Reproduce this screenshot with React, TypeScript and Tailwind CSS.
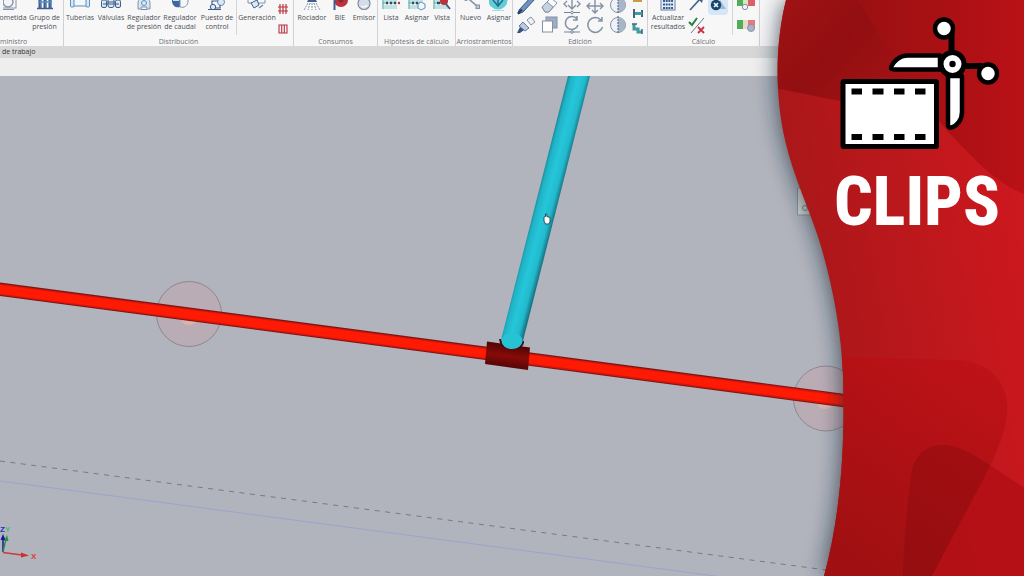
import type { ReactNode } from "react";

const NAVY = "#3f5f8a";
const BLUE = "#5f8fc0";
const PALE = "#dbe7f2";
const SLATE = "#8492a8";
const TEAL = "#3f9c9c";
const CRIMSON = "#b8323f";

/* Command icons are drawn upwards from the caption, the ribbon hides their upper part. */
function BigIcon({ children }: { children: ReactNode }) {
  return (
    <svg viewBox="0 -9 20 20" className="h-5 w-5 shrink-0" fill="none" aria-hidden="true">
      {children}
    </svg>
  );
}

function SmallIcon({ children }: { children: ReactNode }) {
  return (
    <svg viewBox="0 0 20 20" className="h-5 w-5 shrink-0" fill="none" aria-hidden="true">
      {children}
    </svg>
  );
}

function Command({ label, width, children }: { label: string; width: string; children: ReactNode }) {
  return (
    <button
      type="button"
      className={`flex shrink-0 flex-col items-center gap-[2px] text-[7px] leading-[9px] text-[#4c4f55] ${width}`}
    >
      {children}
      <span className="h-[18px] whitespace-pre text-center">{label}</span>
    </button>
  );
}

function Tool({ name, active, children }: { name: string; active?: boolean; children: ReactNode }) {
  return (
    <button type="button" aria-label={name} className={active ? "rounded-sm bg-[#d5e6f5]" : ""}>
      <SmallIcon>{children}</SmallIcon>
    </button>
  );
}

function Group({
  title,
  width,
  align = "items-center",
  children,
}: {
  title: string;
  width: string;
  align?: string;
  children: ReactNode;
}) {
  return (
    <section className={`flex shrink-0 flex-col justify-end border-r border-[#cfd1d4] ${align} ${width}`}>
      <div className="flex h-[31px] w-full items-end">{children}</div>
      <h2 className="mt-[6px] whitespace-nowrap text-[7px] leading-[9px] text-[#6d7076]">{title}</h2>
    </section>
  );
}

function Separator() {
  return <div className="-mb-1 h-[45px] w-px shrink-0 bg-[#d3d5d8]" />;
}

function Ribbon() {
  return (
    <header className="flex h-[46px] shrink-0 items-end overflow-hidden bg-[#f7f7f8]">
      <Group title="ministro" width="w-16" align="items-start">
        <Command label="ometida" width="w-[26px]">
          <BigIcon>
            <rect x="-3" y="-9" width="16" height="17" stroke={SLATE} />
            <circle cx="5" cy="2" r="5" stroke={SLATE} strokeWidth="1.4" fill="#f2f5f8" />
            <path d="M-1 9.500h12" stroke={SLATE} />
          </BigIcon>
        </Command>
        <Command label={"Grupo de\npresión"} width="w-[37px]">
          <BigIcon>
            <path d="M5 -5v13M10 -5v13M15 -5v13" stroke={NAVY} strokeWidth="3" />
            <path d="M6 -5v13M11 -5v13M16 -5v13" stroke={BLUE} />
            <path d="M2 8.500h16" stroke={NAVY} strokeWidth="1.500" />
            <path d="M3 2h14" stroke={BLUE} strokeWidth="1.500" />
          </BigIcon>
        </Command>
      </Group>

      <Group title="Distribución" width="w-[230px]">
        <Command label="Tuberías" width="w-8">
          <BigIcon>
            <path d="M3 -3h14v9H3z" fill="#f3f6fa" stroke={BLUE} />
            <rect x="0.500" y="-5" width="3.500" height="12" rx="1" fill={PALE} stroke={BLUE} />
            <rect x="16" y="-5" width="3.500" height="12" rx="1" fill={PALE} stroke={BLUE} />
          </BigIcon>
        </Command>
        <Command label="Válvulas" width="w-[30px]">
          <BigIcon>
            <rect x="0.500" y="0" width="5" height="7.500" rx="1.500" fill={PALE} stroke={NAVY} />
            <rect x="7" y="-2" width="6" height="9.500" rx="2" fill={PALE} stroke={NAVY} />
            <rect x="14.500" y="0" width="5" height="7.500" rx="1.500" fill={PALE} stroke={NAVY} />
            <path d="M2 4h16M5.500 2h9" stroke={NAVY} strokeWidth="1.200" />
          </BigIcon>
        </Command>
        <Command label={"Regulador\nde presión"} width="w-9">
          <BigIcon>
            <path d="M4 3a6 6 0 0 1 12 0v6h-3V7H7v2H4z" fill={PALE} stroke={SLATE} />
            <circle cx="10" cy="3" r="2.500" stroke={BLUE} />
            <path d="M7 9.500h6" stroke={BLUE} />
          </BigIcon>
        </Command>
        <Command label={"Regulador\nde caudal"} width="w-9">
          <BigIcon>
            <path d="M10 -5H2v6a6 6 0 0 0 8 6z" fill="#3b68a0" />
            <path d="M10 -5h8v6a6 6 0 0 1-8 6z" fill="#f5f8fb" stroke={SLATE} />
            <path d="M3 0h6" stroke="#cfe0f1" strokeWidth="2" />
          </BigIcon>
        </Command>
        <Command label={"Puesto de\ncontrol"} width="w-[38px]">
          <BigIcon>
            <circle cx="6" cy="7" r="2.700" fill={PALE} stroke={NAVY} />
            <circle cx="14" cy="2" r="3.500" fill={PALE} stroke={BLUE} />
            <path d="M5 4V1h6M8 8h5V5M1 9.500h13" stroke={NAVY} strokeWidth="1.200" />
          </BigIcon>
        </Command>
        <Separator />
        <Command label="Generación" width="w-10">
          <BigIcon>
            <path d="M1 -5h9v8H1zM10 -4h8v7h-8" fill="#f5f8fb" stroke={SLATE} />
            <path d="M4 3l3 5 5-3-2-5z" fill={PALE} stroke={NAVY} />
            <path d="M12 8l4-3" stroke={BLUE} strokeWidth="1.500" />
          </BigIcon>
        </Command>
        <div className="-mb-1 flex flex-col">
          <button type="button" aria-label="Red de rociadores" className="h-4 w-3">
            <svg viewBox="0 0 12 16" className="h-4 w-3" fill="none">
              <path d="M3 1v10M6 1v10M9 1v10M1 4h10M1 8h10" stroke={CRIMSON} strokeWidth="1.200" />
            </svg>
          </button>
          <button type="button" aria-label="Malla de rociadores" className="h-4 w-3">
            <svg viewBox="0 0 12 16" className="h-4 w-3" fill="none">
              <path d="M2 6h8v8H2zM4.700 6v8M7.300 6v8" stroke={CRIMSON} strokeWidth="1.100" />
            </svg>
          </button>
        </div>
      </Group>

      <Group title="Consumos" width="w-[84px]">
        <Command label="Rociador" width="w-9">
          <BigIcon>
            <path d="M8 -9h4v9H8zM6 0h8l1 2H5z" fill={NAVY} />
            <path d="M6 3l-4 7M8 3l-2 7M10 3v7M12 3l2 7M14 3l4 7" stroke={SLATE} strokeDasharray="2 1" />
          </BigIcon>
        </Command>
        <Command label="BIE" width="w-5">
          <BigIcon>
            <circle cx="11" cy="0" r="7" fill={CRIMSON} />
            <path d="M4.500 -5v15" stroke={NAVY} strokeWidth="2" />
            <circle cx="11" cy="0" r="2.500" fill="#8d2634" />
          </BigIcon>
        </Command>
        <Command label="Emisor" width="w-7">
          <BigIcon>
            <circle cx="10" cy="3.500" r="6" fill="#d3dce7" stroke="#7f8ba0" strokeWidth="1.200" />
            <path d="M7 6a4 4 0 0 0 6-1" stroke="#f8fafc" strokeWidth="1.500" />
          </BigIcon>
        </Command>
      </Group>

      <Group title="Hipótesis de cálculo" width="w-[78px]">
        <Command label="Lista" width="w-[26px]">
          <BigIcon>
            <path d="M3 -2h13v4H3zM3 5h13v4H3z" fill="#bfe3e2" />
            <path d="M2 -5v14M2 3h14" stroke={TEAL} />
            <path d="M5 3h2M9 3h2M13 3h2" stroke="#34495f" strokeWidth="2.500" />
            <circle cx="18" cy="3" r="1.200" fill={CRIMSON} />
          </BigIcon>
        </Command>
        <Command label="Asignar" width="w-[26px]">
          <BigIcon>
            <path d="M3 -2h13v4H3zM3 5h8v4H3z" fill="#bfe3e2" />
            <path d="M2 -5v14M2 3h11" stroke={TEAL} />
            <path d="M5 3h2M9 3h2" stroke="#34495f" strokeWidth="2.500" />
            <path d="M11 4l3-2 4 2v4l-4 2-3-2z" fill="#f0f6fa" stroke={BLUE} />
          </BigIcon>
        </Command>
        <Command label="Vista" width="w-6">
          <BigIcon>
            <path d="M3 -2h13v4H3zM3 5h13v4H3z" fill="#bfe3e2" />
            <path d="M2 -5v14M2 3h11" stroke={TEAL} />
            <path d="M5 3h3" stroke="#34495f" strokeWidth="2.500" />
            <circle cx="12" cy="1" r="4" fill={CRIMSON} />
            <path d="M14 4l4 5" stroke="#39537c" strokeWidth="1.800" />
          </BigIcon>
        </Command>
      </Group>

      <Group title="Arriostramientos" width="w-[57px]">
        <Command label="Nuevo" width="w-[29px]">
          <BigIcon>
            <path d="M2 -6L17 7" stroke={SLATE} strokeWidth="1.600" />
            <rect x="15" y="5" width="3.500" height="3.500" fill="#b9c6d6" stroke={SLATE} />
            <circle cx="5" cy="-1" r="2" fill={SLATE} />
          </BigIcon>
        </Command>
        <Command label="Asignar" width="w-7">
          <BigIcon>
            <circle cx="9" cy="0" r="9.500" fill="#63cdd6" />
            <path d="M9 -6v13M4 0l5 6 5-6M4 -2h10" stroke="#24698f" strokeWidth="1.500" />
            <path d="M3 10.500h12" stroke="#a5dce0" />
          </BigIcon>
        </Command>
      </Group>

      <Group title="Edición" width="w-[135px]">
        <div className="-mb-1 flex w-full justify-between pl-[3px]">
          <div className="grid grid-cols-[repeat(5,23px)]">
            <Tool name="Editar">
              <path d="M3 15L16 1l3 3L7 17l-5 2z" fill="#6f93c1" stroke="#34547f" />
              <path d="M2 18.500l4-4" stroke="#233c5e" strokeWidth="2" />
            </Tool>
            <Tool name="Borrar">
              <path d="M3 12L12 3l6 5-8 9H6z" fill="#fafbfc" stroke={SLATE} />
              <path d="M8 7l6 5-4 5H6l-3-5z" fill="#c8d1de" stroke={SLATE} />
            </Tool>
            <Tool name="Mover">
              <path d="M10 1v13M6 10l4 4 4-4M5 6L2 9l3 3M15 6l3 3-3 3" stroke={SLATE} strokeWidth="1.400" />
              <path d="M2 17.500h16" stroke="#70849e" />
              <circle cx="10" cy="17.500" r="1.300" fill="#f7f7f8" stroke="#70849e" />
            </Tool>
            <Tool name="Mover grupo">
              <path d="M10 3v14M2 11h16M7 15l3 3 3-3M5 8l-3 3 3 3M15 8l3 3-3 3" stroke={SLATE} strokeWidth="1.400" />
            </Tool>
            <Tool name="Simetría">
              <circle cx="10" cy="10" r="7.500" fill="#eef2f7" stroke={SLATE} />
              <path d="M10 2.500a7.500 7.500 0 0 1 0 15z" fill="#a9b6c8" />
              <path d="M10 1v18" stroke={NAVY} strokeDasharray="2 1" />
            </Tool>
            <Tool name="Copiar propiedades">
              <path d="M11 5l4-3 4 5-4 3z" fill="#eef2f7" stroke={SLATE} />
              <path d="M7 7l6 6-4 3-6-5z" fill="#b9c8db" stroke="#627c9e" />
              <path d="M4 12l4 3-4 3H1z" fill="#31537f" />
            </Tool>
            <Tool name="Copiar">
              <rect x="7" y="2" width="11" height="11" fill="#9fadc2" stroke={SLATE} />
              <rect x="3.500" y="6" width="10" height="11" fill="#fff" stroke={SLATE} />
            </Tool>
            <Tool name="Girar">
              <path d="M15 4a6.500 6.500 0 1 0 1 6M15 1v4h-4" stroke={SLATE} strokeWidth="1.500" />
              <path d="M2 17h16" stroke="#70849e" />
              <circle cx="10" cy="17" r="1.300" fill="#f7f7f8" stroke="#70849e" />
            </Tool>
            <Tool name="Girar grupo">
              <path d="M16 5a7.500 7.500 0 1 0 1.500 7M17 2v4h-4" stroke={SLATE} strokeWidth="1.500" />
            </Tool>
            <Tool name="Simetría con copia">
              <circle cx="10" cy="10" r="7.500" fill="#eef2f7" stroke={SLATE} />
              <path d="M10 2.500a7.500 7.500 0 0 1 0 15z" fill="#a9b6c8" />
              <path d="M10 1v18" stroke={NAVY} strokeDasharray="2 1" />
            </Tool>
          </div>
          <svg viewBox="0 0 16 40" className="h-10 w-4" fill="none" aria-hidden="true">
            <path d="M2 0h9v7H2z" fill="#c99b45" />
            <path d="M3 14v9M11 15v7" stroke="#45627f" strokeWidth="2" />
            <path d="M4 18.500h7" stroke={TEAL} strokeWidth="3" />
            <path d="M3 29v5h4v3h4" stroke={TEAL} strokeWidth="3" />
            <path d="M1 29h5M11 34v5" stroke="#45627f" strokeWidth="1.500" />
          </svg>
        </div>
      </Group>

      <Group title="Cálculo" width="w-28">
        <Command label={"Actualizar\nresultados"} width="w-10">
          <BigIcon>
            <rect x="3" y="-9" width="14" height="19" fill="#e8eef6" stroke="#6982a6" />
            <path d="M5 1h10M5 4.500h10M5 8h10" stroke="#385d91" strokeWidth="2.200" strokeDasharray="2 0.700" />
          </BigIcon>
        </Command>
        <div className="-mb-1 grid grow grid-cols-[20px_20px]">
          <Tool name="Calcular">
            <path d="M2 15L12 4" stroke={NAVY} strokeWidth="1.600" />
            <path d="M8 2l8-2-2 8z" fill={NAVY} />
          </Tool>
          <Tool name="Opciones" active>
            <path d="M12 5l6 9h-6z" fill="#9eb8d5" />
            <circle cx="8" cy="10" r="5.200" fill="#17456e" />
            <path d="M6 8l4 4M10 8l-4 4" stroke="#fff" strokeWidth="1.600" />
          </Tool>
          <Tool name="Comprobar">
            <path d="M1 7l3 3 5-7" stroke="#29803c" strokeWidth="2" />
            <path d="M3 18L16 3" stroke="#6c7888" />
            <path d="M10 12l6 6M16 12l-6 6" stroke="#cb3240" strokeWidth="1.800" />
          </Tool>
        </div>
        <Separator />
        <div className="-mb-1 flex w-[26px] flex-col items-center">
          <Tool name="Escala de resultados">
            <path d="M1 1h6v10H1z" fill="#4fae57" />
            <path d="M7 1h5v10H7z" fill="#d9e4c0" />
            <path d="M12 1h7v10h-7z" fill="#db6068" />
            <circle cx="9" cy="12" r="2.700" fill="#eef3f8" stroke={SLATE} />
          </Tool>
          <Tool name="Leyenda de resultados">
            <path d="M1 5h6v9H1z" fill="#4fae57" />
            <path d="M7 5h5v9H7z" fill="#e9d9c8" />
            <path d="M12 5h7v9h-7z" fill="#e27b80" />
            <circle cx="15" cy="13" r="3.500" fill="#a9b3c5" stroke="#8995ab" />
          </Tool>
        </div>
      </Group>
    </header>
  );
}

function Viewport() {
  return (
    <main className="min-h-0 flex-1 bg-[#b1b4bd]">
      <svg
        viewBox="0 76 1024 500"
        preserveAspectRatio="xMinYMin slice"
        className="block h-full w-full"
        role="img"
        aria-label="Vista 3D de la instalación"
      >
        <defs>
          <linearGradient id="riser" gradientUnits="userSpaceOnUse" x1="533" y1="205" x2="556" y2="211">
            <stop offset="0" stopColor="#14788a" />
            <stop offset="0.200" stopColor="#20b3c6" />
            <stop offset="0.500" stopColor="#26c6da" />
            <stop offset="0.800" stopColor="#22b9cc" />
            <stop offset="1" stopColor="#167585" />
          </linearGradient>
          <linearGradient id="coupling" gradientUnits="userSpaceOnUse" x1="509" y1="345" x2="506" y2="367">
            <stop offset="0" stopColor="#520606" />
            <stop offset="0.500" stopColor="#880b08" />
            <stop offset="1" stopColor="#560606" />
          </linearGradient>
        </defs>

        <path d="M0 461L1024 596" stroke="#777a82" strokeDasharray="5 5.500" />
        <path d="M0 481L1024 617" stroke="#9da3cf" />

        <g fill="#bda9b2" fillOpacity="0.750" stroke="#8f8790">
          <circle cx="189" cy="314" r="32.500" />
          <circle cx="826" cy="398.500" r="32.500" />
        </g>
        <ellipse cx="189" cy="321" rx="7" ry="4" fill="#dbb3ab" />
        <ellipse cx="825" cy="405" rx="7" ry="4" fill="#dbb3ab" />

        <path d="M-10 288L1024 424.300" stroke="#7a1614" strokeWidth="13.400" />
        <path d="M-10 288L1024 424.300" stroke="#d9150b" strokeWidth="11.200" />
        <path d="M-10 288L1024 424.300" stroke="#ff1a04" strokeWidth="8.600" />
        <path d="M487 341.500L530 347.500L528 370L485 364z" fill="url(#coupling)" />
        <path d="M499 339q1 10 13 10t12-8z" fill="#2d0c10" />
        <path d="M568 76H590L523 341Q511 352 501 340z" fill="url(#riser)" />
        <ellipse cx="512" cy="341" rx="10.500" ry="8" fill="#27c3d5" />

        <path
          d="M544 217l1.500-.500V214h1.300v2.500l3.200 1v4.500l-1.500 2h-3l-1.500-3z"
          fill="#fff"
          stroke="#24434a"
          strokeWidth="0.900"
        />

        <path d="M797.500 188v27H815v-27z" fill="#d6d7d7" stroke="#909399" />
        <circle cx="805" cy="208" r="2.500" fill="none" stroke="#6f9a72" />

        <path d="M3 552V538" stroke="#151c90" strokeWidth="1.500" />
        <path d="M3 552L6 539" stroke="#2c8a4c" strokeWidth="1.300" />
        <path d="M0.500 540L3 534l2.500 6z" fill="#151c90" />
        <path d="M4 541l3-6 1.500 6z" fill="#2a8f48" />
        <path d="M3 552.500L22 555" stroke="#cf3a38" strokeWidth="1.300" />
        <path d="M21 552.500l8 3-8 2z" fill="#cf2e2c" />
        <g className="font-['Liberation_Sans',sans-serif] text-[8px] font-bold">
          <text x="0" y="532" fill="#2330c4">Z</text>
          <text x="5" y="532" fill="#43c46c">Y</text>
          <text x="31" y="559" fill="#dc3b38">X</text>
        </g>
      </svg>
    </main>
  );
}

const EDGE =
  "M786 0C776 40 774 92 785 140C793 176 811 213 820 243C833 287 841 330 843 375C845 440 842 510 824 576H1024V0Z";

function ClipsBanner() {
  return (
    <aside className="absolute inset-y-0 right-0 w-[280px]">
      <svg
        viewBox="744 0 280 576"
        preserveAspectRatio="none"
        className="absolute inset-0 h-full w-full"
        aria-hidden="true"
      >
        <defs>
          <linearGradient id="red" gradientUnits="userSpaceOnUse" x1="790" y1="250" x2="1024" y2="210">
            <stop offset="0" stopColor="#a91719" />
            <stop offset="0.500" stopColor="#bb181c" />
            <stop offset="1" stopColor="#cd181e" />
          </linearGradient>
          <linearGradient id="facet" gradientUnits="userSpaceOnUse" x1="860" y1="60" x2="1024" y2="60">
            <stop offset="0" stopColor="#9a1012" />
            <stop offset="1" stopColor="#b91116" />
          </linearGradient>
          <linearGradient id="facetDark" gradientUnits="userSpaceOnUse" x1="780" y1="0" x2="890" y2="100">
            <stop offset="0" stopColor="#a01214" />
            <stop offset="0.500" stopColor="#920f11" />
            <stop offset="1" stopColor="#a31215" />
          </linearGradient>
          <linearGradient id="lobe" gradientUnits="userSpaceOnUse" x1="990" y1="370" x2="860" y2="560">
            <stop offset="0" stopColor="#be1217" />
            <stop offset="1" stopColor="#a01012" />
          </linearGradient>
          <filter id="soft" x="-30%" y="-10%" width="160%" height="120%">
            <feGaussianBlur stdDeviation="11" />
          </filter>
          <clipPath id="edge">
            <path d={EDGE} />
          </clipPath>
        </defs>
        <path d={EDGE} fill="#1c2632" fillOpacity="0.800" filter="url(#soft)" />
        <g clipPath="url(#edge)">
          <path d="M744 0H1024V576H744z" fill="url(#red)" />
          <path d="M770 87L840 101L908 114L940 130L858 0H770z" fill="url(#facetDark)" />
          <path d="M858 0C885 45 922 104 953 137C980 166 1000 185 1024 194V0z" fill="url(#facet)" />
          <path
            d="M840 357L958 360C998 362 1010 392 1007 416C1004 438 994 458 984 478L932 576H820z"
            fill="url(#lobe)"
          />
          <path
            d="M903 576C904 540 908 500 911 475C914 454 928 444 944 445C964 446 980 459 1024 488V576z"
            fill="#7d080c"
            fillOpacity="0.350"
          />
          <path d="M984 478L990 465L1024 488V576H932z" fill="#b90f15" fillOpacity="0.700" />
        </g>
      </svg>

      <div className="relative flex flex-col items-start pl-[90px] pt-4">
        <svg viewBox="834 16 168 136" className="h-[136px] w-[168px]" fill="none" aria-hidden="true">
          <rect x="843" y="81.500" width="93.500" height="65" rx="1" fill="#fff" stroke="#000" strokeWidth="5" />
          <path
            d="M851.500 88.500h10.500v6h-10.500zM872.500 88.500h11v6h-11zM894 88.500h10.500v6h-10.500zM915 88.500h10.500v6h-10.500zM851.500 134h10.500v6h-10.500zM872.500 134h11v6h-11zM894 134h10.500v6h-10.500zM915 134h10.500v6h-10.500z"
            fill="#000"
          />
          <path
            d="M940 55.500H908C899 55.500 893 62 891 67Q890.500 69.500 894 69.500H940z"
            fill="#fff"
            stroke="#000"
            strokeWidth="4.500"
            strokeLinejoin="round"
          />
          <path
            d="M948 76V125Q948 128 951.500 127.500C957 126 962 120 962 112V76z"
            fill="#fff"
            stroke="#000"
            strokeWidth="4.500"
            strokeLinejoin="round"
          />
          <path d="M951.500 32V56M960 66H982" stroke="#000" strokeWidth="6" />
          <circle cx="944" cy="28.500" r="9" fill="#fff" stroke="#000" strokeWidth="4.500" />
          <circle cx="988" cy="73.500" r="9" fill="#fff" stroke="#000" strokeWidth="4.500" />
          <circle cx="952.500" cy="64" r="11.500" fill="#fff" stroke="#000" strokeWidth="5" />
          <circle cx="952.500" cy="64" r="3.200" fill="#000" />
        </svg>
        <h1 className="mt-3 font-['Roboto_Condensed','Liberation_Sans_Narrow',Roboto,sans-serif] text-[68px] font-extrabold leading-[76px] text-white">
          CLIPS
        </h1>
      </div>
    </aside>
  );
}

export default function App() {
  return (
    <div className="relative flex h-screen flex-col overflow-hidden bg-[#eeeeee] font-['Open_Sans','Noto_Sans',sans-serif]">
      <Ribbon />
      <div className="h-3 shrink-0 bg-[#d7d7d8] pl-[2px] text-[7px] leading-3 text-[#333333]">de trabajo</div>
      <div className="h-[18px] shrink-0 bg-[#eeeeef]" />
      <Viewport />
      <ClipsBanner />
    </div>
  );
}
